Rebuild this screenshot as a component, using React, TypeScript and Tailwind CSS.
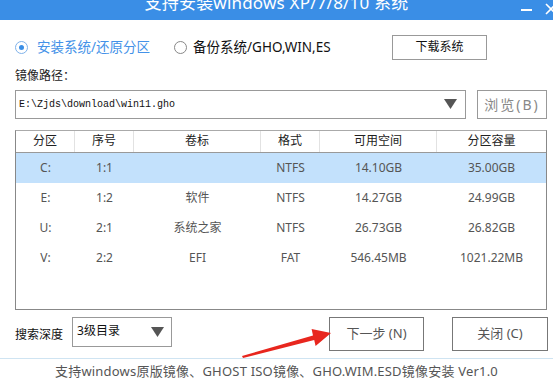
const rows = [
  { part: "C:", idx: "1:1", label: "", fmt: "NTFS", free: "14.10GB", size: "35.00GB", active: true },
  { part: "E:", idx: "1:2", label: "软件", fmt: "NTFS", free: "14.27GB", size: "24.99GB" },
  { part: "U:", idx: "2:1", label: "系统之家", fmt: "NTFS", free: "26.73GB", size: "26.82GB" },
  { part: "V:", idx: "2:2", label: "EFI", fmt: "FAT", free: "546.45MB", size: "1021.22MB" },
];

const cols = "grid grid-cols-[59px_59px_127px_59px_117px_1fr]";

const Caret = () => (
  <svg width="13" height="10" viewBox="0 0 13 10">
    <path d="M0 0 H13 L6.5 10 Z" fill="#555" />
  </svg>
);

export default function App() {
  return (
    <div
      className="w-[553px] h-[378px] overflow-hidden bg-white flex flex-col relative"
      style={{ fontFamily: '"Noto Sans", "Noto Sans CJK SC", sans-serif' }}
    >
      {/* Title bar */}
      <div className="h-[20px] bg-[#3a8ee6] flex items-start justify-center relative overflow-hidden">
        <span className="text-white text-[17px] leading-none -mt-[6px] tracking-[0.2px]">
          支持安装windows XP/7/8/10 系统
        </span>
        <span className="absolute left-[521px] top-[9px] w-[11px] h-[2px] bg-white" />
        <svg className="absolute left-[545px] top-[3px]" width="12" height="12" viewBox="0 0 12 12">
          <path d="M1 1 L11 11 M11 1 L1 11" stroke="#fff" strokeWidth="1.6" />
        </svg>
      </div>

      {/* Radio row */}
      <div className="flex items-center h-[25px] mt-[15px] pl-[15px]">
        <span className="w-[13px] h-[13px] rounded-full border border-[#7fb2ea] flex items-center justify-center">
          <span className="w-[5px] h-[5px] rounded-full bg-[#3a8ee6]" />
        </span>
        <span className="ml-[9px] text-[13.5px] text-[#4492e8] leading-none">安装系统/还原分区</span>
        <span className="ml-[24px] w-[13px] h-[13px] rounded-full border border-[#888]" />
        <span className="ml-[6px] text-[13.5px] text-[#111] leading-none">备份系统/GHO,WIN,ES</span>
        <button className="ml-auto mr-[66px] w-[95px] h-[25px] border border-[#999] bg-white text-[12px] text-[#111] leading-none">
          下载系统
        </button>
      </div>

      {/* Path */}
      <div className="mt-[10px] pl-[15px] text-[12px] text-[#222] leading-none">镜像路径：</div>
      <div className="flex mt-[8px] pl-[15px] h-[29px]">
        <div className="w-[451px] border border-[#999] flex items-center justify-between pl-[3px] pr-[8px]">
          <span className="text-[10px] text-[#111]" style={{ fontFamily: '"Liberation Mono", monospace' }}>
            E:\Zjds\download\win11.gho
          </span>
          <Caret />
        </div>
        <button className="ml-[11px] w-[70px] border border-[#999] bg-white text-[14px] text-[#888] tracking-[2px]">
          浏览(B)
        </button>
      </div>

      {/* Table */}
      <div className="mt-[11px] ml-[15px] w-[532px] h-[181px] border border-[#888] border-t-[#aaa]">
        <div className={`${cols} h-[22px] border-b border-[#999] text-[12px] text-[#222]`}>
          {["分区", "序号", "卷标", "格式", "可用空间", "分区容量"].map((h, i) => (
            <div
              key={h}
              className={`flex items-center justify-center ${i < 5 ? "border-r border-[#e2e2e2]" : ""}`}
            >
              {h}
            </div>
          ))}
        </div>
        {rows.map((r) => (
          <div
            key={r.part}
            className={`${cols} h-[30px] text-[12px] text-[#555] ${r.active ? "bg-[#c3e1fc]" : ""}`}
          >
            <div className="flex items-center justify-center">{r.part}</div>
            <div className="flex items-center justify-center">{r.idx}</div>
            <div className="flex items-center justify-center">{r.label}</div>
            <div className="flex items-center justify-center">{r.fmt}</div>
            <div className="flex items-center justify-center">{r.free}</div>
            <div className="flex items-center justify-center">{r.size}</div>
          </div>
        ))}
      </div>

      {/* Bottom controls */}
      <div className="flex items-start mt-[7px] pl-[15px] h-[34px] relative">
        <span className="mt-[12px] text-[12px] text-[#111] leading-none">搜索深度</span>
        <div className="ml-[9px] w-[100px] h-[30px] border border-[#999] flex items-center justify-between pl-[4px] pr-[7px]">
          <span className="text-[12px] text-[#111] leading-none -mt-[3px]">3级目录</span>
          <Caret />
        </div>
        <button className="ml-[157px] w-[95px] h-[34px] border border-[#777] bg-white text-[13px] text-[#555]">
          下一步 (N)
        </button>
        <button className="ml-[28px] w-[96px] h-[34px] border border-[#777] bg-white text-[13px] text-[#555]">
          关闭 (C)
        </button>

        {/* red arrow */}
        <svg className="absolute left-[230px] top-[6px]" width="105" height="36" viewBox="0 0 105 36">
          <path d="M12 33 L83 12.5 L81.6 6 L101 10 L85.6 23 L84.2 17 L13 35 Z" fill="#e8261e" />
        </svg>
      </div>

      <div className="mt-[7px] h-px bg-[#cfe4f2]" />
      <div className="text-center text-[13px] text-[#555] leading-none mt-[6px] tracking-[0.2px]">
        支持windows原版镜像、GHOST ISO镜像、GHO.WIM.ESD镜像安装 Ver1.0
      </div>
    </div>
  );
}
